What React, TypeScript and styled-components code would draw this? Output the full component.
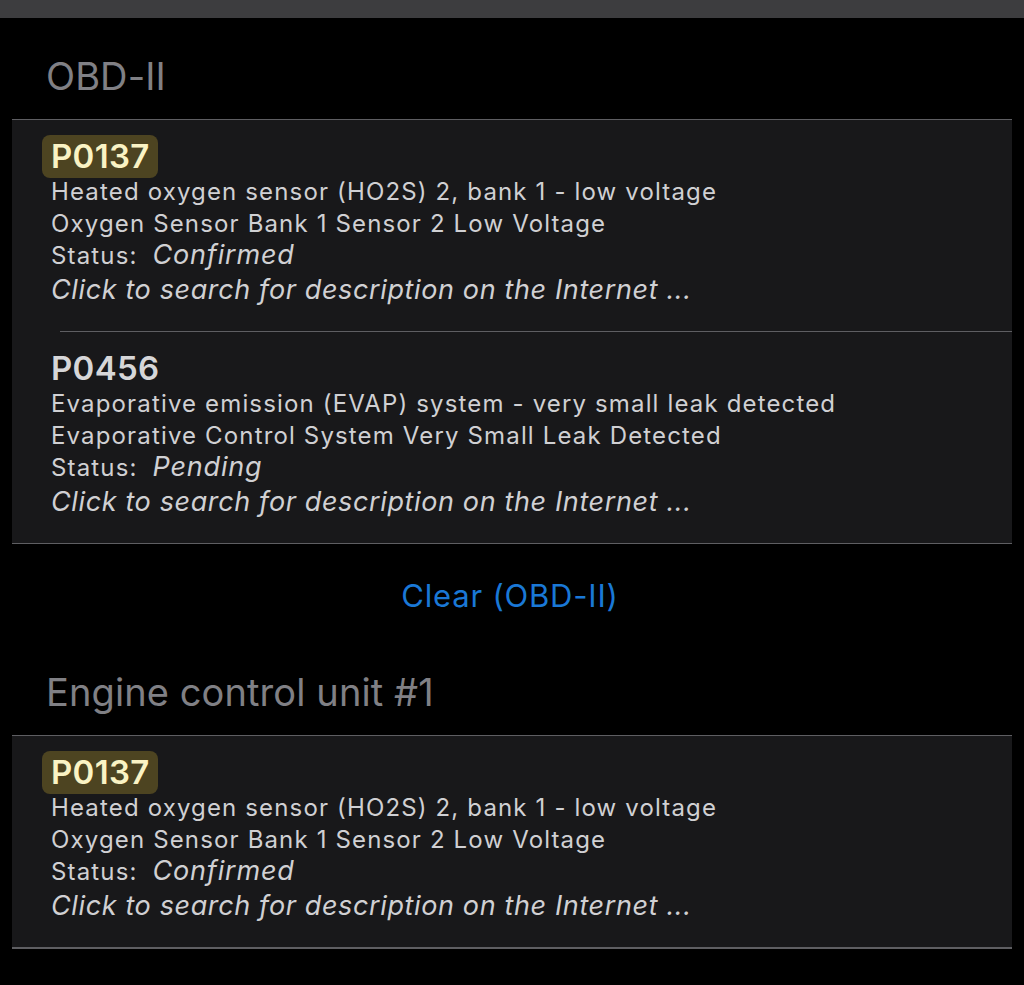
import React from "react";
import styled, { createGlobalStyle } from "styled-components";

const Global = createGlobalStyle`
  html, body { margin: 0; padding: 0; background: #000; }
  body { font-family: Inter, "Noto Sans", sans-serif; -webkit-font-smoothing: antialiased; }
`;

const Page = styled.div`
  min-height: 985px;
  background: #000;
  display: flex;
  flex-direction: column;
`;

const TopBar = styled.div`
  height: 18px;
  background: #3d3d3f;
`;

const Content = styled.div`
  display: flex;
  flex-direction: column;
  padding: 0 12px;
`;

const SectionHeader = styled.h2`
  margin: 0;
  padding-left: 34px;
  font-size: 38px;
  font-weight: 400;
  line-height: 46px;
  color: #808085;
  letter-spacing: 0.1px;
`;

const Card = styled.div<{ $thick?: boolean }>`
  background: #18181a;
  border-top: 1px solid #5e5e62;
  border-bottom: ${(p) => (p.$thick ? "2px" : "1px")} solid #5e5e62;
  display: flex;
  flex-direction: column;
`;

const Item = styled.div`
  padding: 15px 0 25px 39px;
  display: flex;
  flex-direction: column;
  align-items: flex-start;
`;

const Separator = styled.div`
  height: 1px;
  background: #5e5e62;
  margin-left: 48px;
`;

const Code = styled.div<{ $hl?: boolean }>`
  font-size: 33px;
  font-weight: 600;
  line-height: 43px;
  letter-spacing: 0.3px;
  padding: 0 8px 0 9px;
  margin-left: -9px;
  border-radius: 8px;
  color: ${(p) => (p.$hl ? "#faf3c4" : "#d6d6d8")};
  background: ${(p) => (p.$hl ? "#4d4421" : "transparent")};
  margin-bottom: -2px;
`;

const Line = styled.div<{ $link?: boolean }>`
  height: 32px;
  font-size: ${(p) => (p.$link ? "27px" : "24px")};
  line-height: 32px;
  color: #d0d0d3;
  white-space: nowrap;
  letter-spacing: ${(p) => (p.$link ? "0.62px" : "1.15px")};
  margin-top: ${(p) => (p.$link ? "2px" : "0")};
  font-style: ${(p) => (p.$link ? "italic" : "normal")};
`;

const Em = styled.span`
  display: inline-block;
  font-style: italic;
  font-size: 27px;
  line-height: 1;
  letter-spacing: 0.8px;
  margin-left: 15px;
`;

const ClearButton = styled.button`
  align-self: center;
  background: none;
  border: none;
  padding: 0;
  margin: 32px 0 0 -4px;
  font-family: inherit;
  font-size: 31px;
  line-height: 40px;
  letter-spacing: 0.8px;
  color: #1a78d6;
  cursor: pointer;
`;

const HeaderWrap = styled.div<{ $top: number }>`
  margin-top: ${(p) => p.$top}px;
  margin-bottom: 20px;
`;

type Dtc = { code: string; hl?: boolean; desc: string; name: string; status: string };

const obd: Dtc[] = [
  {
    code: "P0137",
    hl: true,
    desc: "Heated oxygen sensor (HO2S) 2, bank 1 - low voltage",
    name: "Oxygen Sensor Bank 1 Sensor 2 Low Voltage",
    status: "Confirmed",
  },
  {
    code: "P0456",
    desc: "Evaporative emission (EVAP) system - very small leak detected",
    name: "Evaporative Control System Very Small Leak Detected",
    status: "Pending",
  },
];

const ecu: Dtc[] = [obd[0]];

function DtcItem({ d }: { d: Dtc }) {
  return (
    <Item>
      <Code $hl={d.hl}>{d.code}</Code>
      <Line>{d.desc}</Line>
      <Line>{d.name}</Line>
      <Line>
        Status:<Em>{d.status}</Em>
      </Line>
      <Line $link>Click to search for description on the Internet ...</Line>
    </Item>
  );
}

function DtcList({ items, thick }: { items: Dtc[]; thick?: boolean }) {
  return (
    <Card $thick={thick}>
      {items.map((d, i) => (
        <React.Fragment key={i}>
          {i > 0 && <Separator />}
          <DtcItem d={d} />
        </React.Fragment>
      ))}
    </Card>
  );
}

export default function App() {
  return (
    <Page>
      <Global />
      <TopBar />
      <Content>
        <HeaderWrap $top={35}>
          <SectionHeader>OBD-II</SectionHeader>
        </HeaderWrap>
        <DtcList items={obd} />
        <ClearButton>Clear (OBD-II)</ClearButton>
        <HeaderWrap $top={53}>
          <SectionHeader>Engine control unit #1</SectionHeader>
        </HeaderWrap>
        <DtcList items={ecu} thick />
      </Content>
    </Page>
  );
}
